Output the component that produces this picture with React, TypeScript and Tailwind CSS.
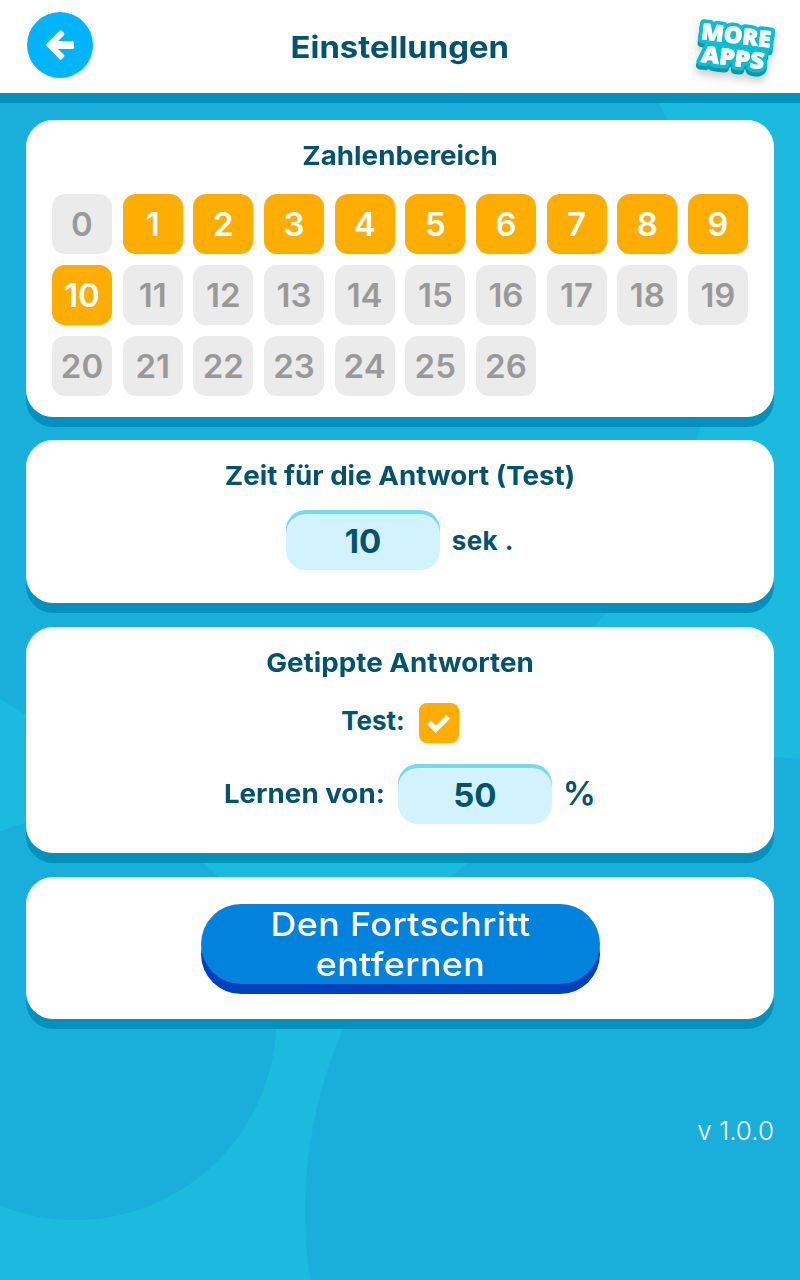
import React from 'react';

const numbers = Array.from({ length: 27 }, (_, i) => i);
const isSelected = (n: number) => n >= 1 && n <= 10;

const Background: React.FC = () => (
  <svg className="absolute inset-0 -z-10" width="800" height="1280" viewBox="0 0 800 1280" aria-hidden="true">
    <g fill="#19afda">
      <circle cx="255.5" cy="319" r="457.5" />
      <circle cx="75" cy="1018.5" r="201.5" />
      <circle cx="759" cy="1211" r="454" />
    </g>
  </svg>
);

const LogoText: React.FC = () => (
  <>
    <text x="7.5" y="26" textLength="70" lengthAdjust="spacingAndGlyphs">MORE</text>
    <text x="10.5" y="48.5" textLength="63" lengthAdjust="spacingAndGlyphs">APPS</text>
  </>
);

const MoreAppsLogo: React.FC = () => (
  <svg
    className="drop-shadow-[0_5px_4px_rgba(0,0,0,0.2)]"
    width="84"
    height="68"
    viewBox="0 0 84 68"
    fontFamily="'Open Sans', sans-serif"
    fontWeight="800"
    fontSize="22.5"
    strokeLinejoin="round"
  >
    <g transform="rotate(7 8 26)">
      <g transform="translate(0 4)" fill="#0897a8" stroke="#0897a8" strokeWidth="8">
        <LogoText />
      </g>
      <g fill="#05c0d4" stroke="#05c0d4" strokeWidth="8">
        <LogoText />
      </g>
      <g fill="#fff" stroke="#fff" strokeWidth="0.8">
        <LogoText />
      </g>
    </g>
  </svg>
);

const Header: React.FC = () => (
  <header className="grid h-[103px] grid-cols-[1fr_auto_1fr] border-b-10 border-[#0091bf] bg-white">
    <button aria-label="Zurück" className="mt-3 ml-[27px] flex size-[66px] items-center justify-center rounded-full bg-[#00b4fc]">
      <svg width="30" height="32" viewBox="45 29 30 32" fill="#fff" stroke="#fff" strokeWidth="3" strokeLinejoin="round">
        <path d="M47.6 45 60.7 31.9 62.9 34.1 54.5 42.5H72.5V47.5H54.5L62.9 55.9 60.7 58.1Z" />
      </svg>
    </button>
    <h1 className="mt-[27px] scale-x-[1.095] text-[30px] leading-10 font-bold">Einstellungen</h1>
    <div className="mt-[13px] mr-[23px] justify-self-end">
      <MoreAppsLogo />
    </div>
  </header>
);

interface CardProps {
  title?: string;
  className: string;
  children: React.ReactNode;
}

const Card: React.FC<CardProps> = ({ title, className, children }) => (
  <section className={`rounded-[27px] bg-white px-[26px] shadow-[0_10px_0_#0091bf] ${className}`}>
    {title && <h2 className="scale-x-[1.067] text-center text-[26px] leading-9 font-bold">{title}</h2>}
    {children}
  </section>
);

const ValueBox: React.FC<{ children: React.ReactNode }> = ({ children }) => (
  <div className="flex h-[60px] w-[153.5px] items-center justify-center rounded-[20px] bg-[#d2f2fe] pt-[3px] text-[33px] font-bold shadow-[inset_0_4px_0_#78d9ec]">
    {children}
  </div>
);

const App: React.FC = () => {
  return (
    <div className="relative isolate h-[1280px] w-[800px] overflow-hidden bg-[#1cbadf] font-['Inter',sans-serif] text-[#00536c]">
      <Background />
      <Header />

      <main className="px-[26px] pt-[17px]">
        <Card title="Zahlenbereich" className="pt-[18px] pb-[21px]">
          <div className="mt-5 grid grid-cols-[repeat(10,60px)] justify-between gap-y-[11px]">
            {numbers.map((n) => (
              <button
                key={n}
                className={`flex size-[60px] items-center justify-center rounded-[13px] pt-0.5 text-[33px] font-semibold ${
                  isSelected(n) ? 'bg-[#ffad00] text-white' : 'bg-[#ebebeb] text-[#999]'
                }`}
              >
                {n}
              </button>
            ))}
          </div>
        </Card>

        <Card title="Zeit für die Antwort (Test)" className="mt-[23px] pt-[18px] pb-[33px]">
          <div className="mt-4 flex items-center justify-center gap-3">
            <ValueBox>10</ValueBox>
            <span className="text-[26px] font-bold tracking-[0.4px]">sek .</span>
          </div>
        </Card>

        <Card title="Getippte Antworten" className="mt-6 pt-[18px] pb-[29px]">
          <div className="mt-[22px] flex h-10 justify-center gap-[14px]">
            <span className="text-[26px] leading-9 font-bold">Test:</span>
            <div className="flex size-10 items-center justify-center rounded-lg bg-[#ffad00] pt-0.5">
              <svg width="23" height="18" viewBox="0 0 23 18" fill="none" stroke="#fff" strokeWidth="5.2">
                <path d="M1.9 7.2 8.7 14.2 21.1 1.9" />
              </svg>
            </div>
          </div>
          <div className="mt-[21px] flex items-center justify-center gap-[13px] pl-[30px]">
            <span className="origin-right scale-x-[1.067] pb-0.5 text-[26px] font-bold">Lernen von:</span>
            <ValueBox>50</ValueBox>
            <span className="-ml-0.5 text-[33px] font-semibold">%</span>
          </div>
        </Card>

        <Card className="mt-6 pt-[27px] pb-[35px]">
          <button className="mx-auto block h-20 w-[399px] rounded-[40px] bg-[#0082dd] text-[33px] leading-10 font-medium text-white shadow-[0_10px_0_#0040bd]">
            <span className="block scale-x-[1.09] tracking-[0.3px]">
              Den Fortschritt
              <br />
              entfernen
            </span>
          </button>
        </Card>

        <p className="mt-[94px] text-right text-[26px] leading-9 font-light text-white">v 1.0.0</p>
      </main>
    </div>
  );
};

export default App;
